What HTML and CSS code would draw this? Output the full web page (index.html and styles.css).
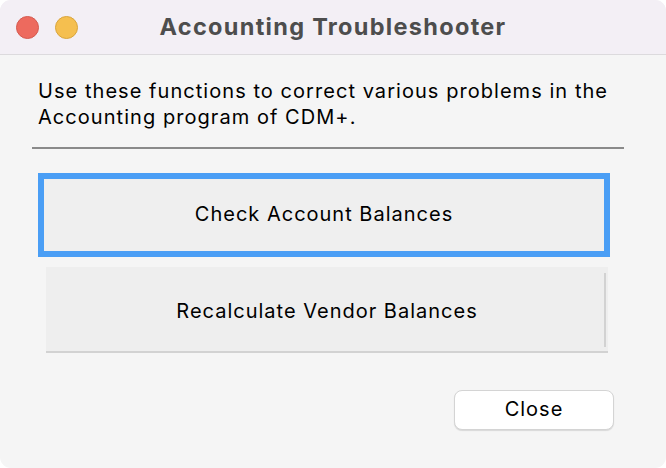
FILE: index.html
```html
<!DOCTYPE html>
<html>
<head>
<meta charset="utf-8">
<link rel="stylesheet" href="styles.css">
</head>
<body>
<div class="window">
  <div class="titlebar">
    <div class="lights">
      <span class="light red"></span>
      <span class="light yellow"></span>
    </div>
    <div class="title">Accounting Troubleshooter</div>
  </div>
  <div class="content">
    <p class="intro">Use these functions to correct various problems in the Accounting program of CDM+.</p>
    <hr class="sep">
    <button class="big focused">Check Account Balances</button>
    <button class="big plain">Recalculate Vendor Balances</button>
    <div class="footer">
      <button class="close">Close</button>
    </div>
  </div>
</div>
</body>
</html>
```
FILE: styles.css
```css
html, body {
  margin: 0;
  padding: 0;
  background: #ffffff;
}
body {
  font-family: Inter, "Noto Sans", sans-serif;
  color: #000;
}
.window {
  width: 666px;
  height: 468px;
  border-radius: 11px;
  overflow: hidden;
  background: #f5f5f5;
  display: flex;
  flex-direction: column;
}
.titlebar {
  height: 54px;
  flex: none;
  background: #f3eff5;
  border-bottom: 1px solid #dcdadd;
  display: flex;
  align-items: center;
  justify-content: center;
  position: relative;
}
.lights {
  position: absolute;
  left: 16px;
  top: 16px;
  display: flex;
  gap: 16px;
}
.light {
  width: 23px;
  height: 23px;
  border-radius: 50%;
  box-sizing: border-box;
}
.red {
  background: #ed6a5e;
  border: 1px solid #d55a4f;
}
.yellow {
  background: #f5bf4f;
  border: 1px solid #d9a53c;
}
.title {
  font-size: 23.5px;
  font-weight: 700;
  color: #4d4d4d;
  letter-spacing: 1.3px;
  padding-bottom: 1px;
}
.content {
  flex: 1;
  display: flex;
  flex-direction: column;
  padding: 0 42px 0 32px;
}
.intro {
  margin: 23px 0 0 6px;
  font-size: 20px;
  line-height: 26px;
  letter-spacing: 1.05px;
  width: 600px;
}
.sep {
  margin: 17px 0 0 0;
  border: none;
  height: 2px;
  background: #8a8a8a;
  width: 592px;
}
.big {
  font-family: inherit;
  font-size: 20px;
  letter-spacing: 1px;
  color: #000;
  background: #efefef;
  box-sizing: border-box;
  padding: 0;
  cursor: default;
}
.focused {
  margin: 24px 0 0 6px;
  width: 572px;
  height: 84px;
  border: 6px solid #4a9ef5;
  padding-bottom: 3px;
}
.plain {
  margin: 10px 0 0 14px;
  width: 562px;
  height: 86px;
  border: none;
  border-bottom: 2px solid #d2d2d2;
  background: linear-gradient(#d2d2d2, #d2d2d2) no-repeat right 2px top 6px / 2px 74px, #eeeeee;
  padding-top: 3px;
}
.footer {
  display: flex;
  justify-content: flex-end;
  margin-top: 37px;
  padding-right: 10px;
}
.close {
  width: 160px;
  height: 40px;
  background: #ffffff;
  border: 1px solid #d4d4d4;
  border-radius: 8px;
  box-shadow: 0 1px 1px rgba(0,0,0,0.12);
  font-family: inherit;
  font-size: 20px;
  letter-spacing: 1px;
  color: #000;
  padding: 0 0 3px 0;
}
```
